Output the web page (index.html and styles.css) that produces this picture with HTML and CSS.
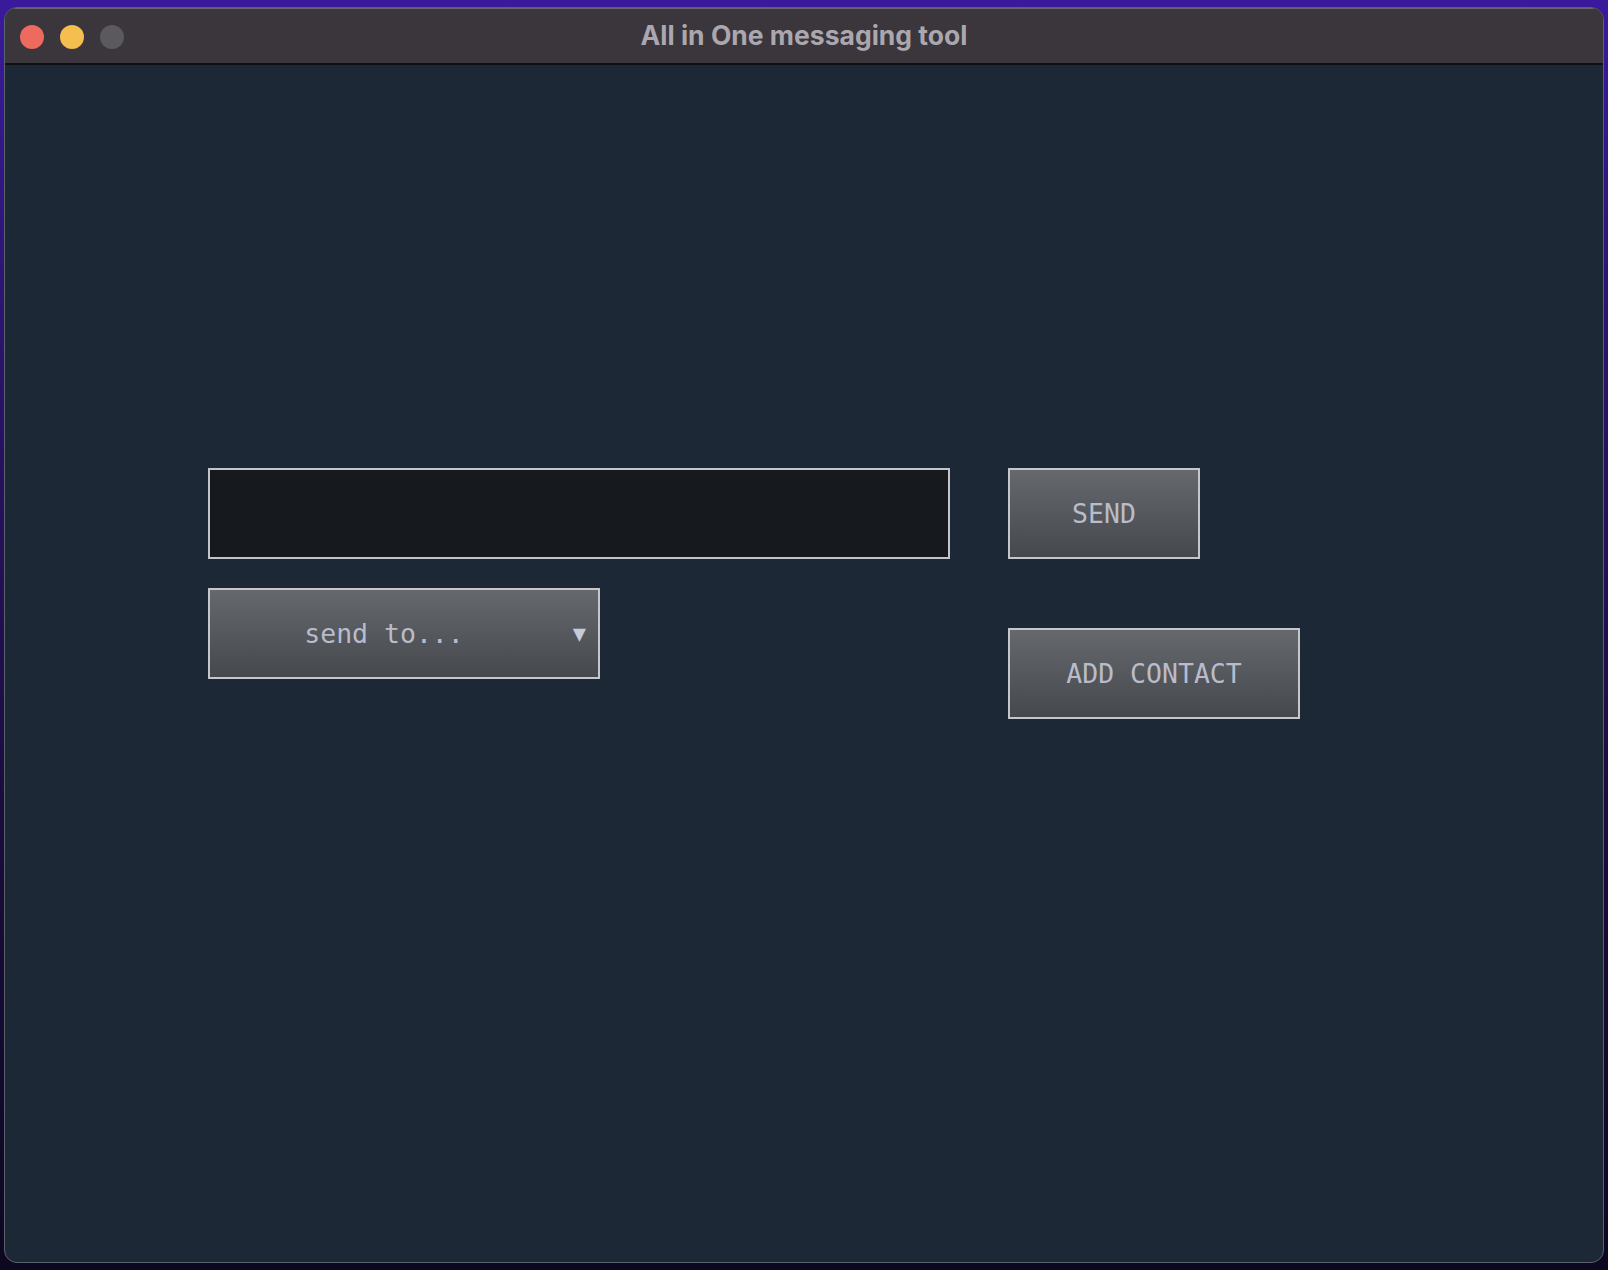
FILE: index.html
```html
<!DOCTYPE html>
<html lang="en">
<head>
<meta charset="utf-8">
<title>All in One messaging tool</title>
<link rel="stylesheet" href="styles.css">
</head>
<body>
<div class="window">
  <div class="titlebar">
    <div class="lights">
      <span class="light red"></span>
      <span class="light yellow"></span>
      <span class="light gray"></span>
    </div>
    <div class="title">All in One messaging tool</div>
  </div>
  <div class="content">
    <div class="col left">
      <div class="msg-input"></div>
      <div class="select">
        <span class="select-label">send to...</span>
        <span class="select-arrow">&#9660;</span>
      </div>
    </div>
    <div class="col right">
      <div class="btn send">SEND</div>
      <div class="btn add">ADD CONTACT</div>
    </div>
  </div>
</div>
</body>
</html>
```
FILE: styles.css
```css
html, body {
  margin: 0;
  padding: 0;
  width: 1608px;
  height: 1270px;
  overflow: hidden;
}
body {
  background: linear-gradient(180deg, #3a1a9c 0px, #2c1470 300px, #1a0c3e 800px, #0e0720 1270px);
  font-family: "DejaVu Sans Mono", monospace;
}
.window {
  margin: 7px 4px 0 4px;
  width: 1600px;
  height: 1256px;
  box-sizing: border-box;
  border: 1px solid #5a626c;
  border-radius: 13px;
  overflow: hidden;
  background: #1c2836;
  display: flex;
  flex-direction: column;
}
.titlebar {
  height: 57px;
  flex: none;
  background: #3a363c;
  border-top: 1px solid #6a666c;
  border-bottom: 2px solid #111113;
  box-sizing: border-box;
  position: relative;
  display: flex;
  align-items: center;
  justify-content: center;
}
.lights {
  position: absolute;
  left: 15px;
  top: 16px;
  display: flex;
  gap: 16px;
}
.light {
  width: 24px;
  height: 24px;
  border-radius: 50%;
  display: block;
}
.red { background: #ee695e; }
.yellow { background: #f5bf4f; }
.gray { background: #5b585e; }
.title {
  font-family: Inter, "Noto Sans", sans-serif;
  font-weight: 700;
  font-size: 26.5px;
  color: #aba7af;
  margin-top: -3px;
}
.content {
  flex: 1;
  display: flex;
  padding: 403px 0 0 203px;
  gap: 58px;
  align-items: flex-start;
}
.col {
  display: flex;
  flex-direction: column;
}
.left { gap: 29px; }
.right { gap: 69px; }
.msg-input {
  width: 742px;
  height: 91px;
  box-sizing: border-box;
  border: 2px solid #c4c5c8;
  background: #16191e;
}
.select, .btn {
  height: 91px;
  box-sizing: border-box;
  border: 2px solid #c6c7cb;
  background: linear-gradient(180deg, #65686d 0%, #55585d 50%, #45484d 100%);
  color: #b9bccb;
  font-size: 26.5px;
  display: flex;
  align-items: center;
  justify-content: center;
}
.select {
  width: 392px;
  position: relative;
}
.select-label {
  margin-left: -40px;
}
.select-arrow {
  position: absolute;
  right: 12px;
  top: 33px;
  font-size: 22px;
  line-height: 22px;
  color: #c7cad8;
}
.send { width: 192px; }
.add { width: 292px; }
```
